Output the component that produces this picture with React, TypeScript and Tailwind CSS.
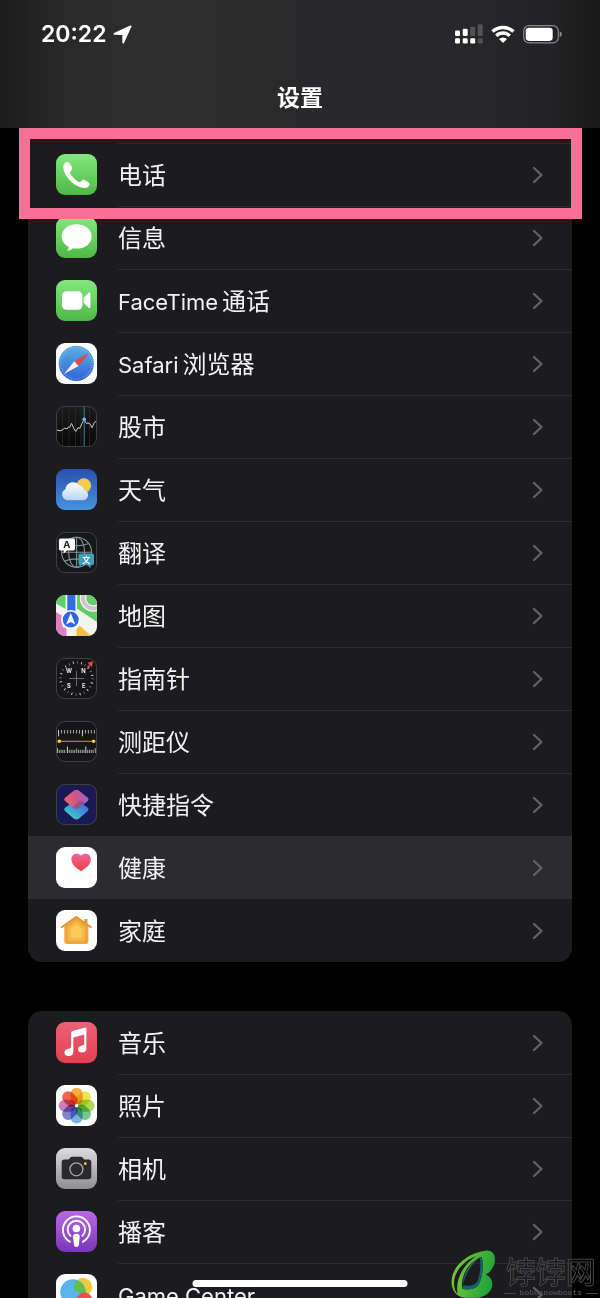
import type { ReactNode } from "react";

const SANS = "font-['Inter','Noto_Sans_CJK_SC',sans-serif]";

function Tile({ children, rim = false }: { children: ReactNode; rim?: boolean }) {
  return (
    <svg
      viewBox="0 0 41 41"
      aria-hidden="true"
      className={
        rim
          ? "size-[41px] shrink-0 rounded-[9px] outline outline-1 -outline-offset-1 outline-[#404042]"
          : "size-[41px] shrink-0 rounded-[9px]"
      }
    >
      {children}
    </svg>
  );
}

function Fill({ id, from, to }: { id: string; from: string; to: string }) {
  return (
    <>
      <defs>
        <linearGradient id={id} x1="0" y1="0" x2="0" y2="1">
          <stop offset="0" stopColor={from} />
          <stop offset="1" stopColor={to} />
        </linearGradient>
      </defs>
      <rect width="41" height="41" fill={`url(#${id})`} />
    </>
  );
}

const PhoneIcon = () => (
  <Tile>
    <Fill id="phone" from="#83e87e" to="#4fb845" />
    <path
      d="M11.4 7.8C9.6 7.6 7.3 9.9 7.3 13C7.6 22.6 19 33.6 29 34C31.6 34 34 31.4 33.7 29.7C33.3 28.4 29.6 26.2 27.7 25.7C25.9 25.4 25 27.9 23.6 28C20.6 27.4 14.3 21.2 14 18.4C14.1 17 16.5 16.2 16.2 14.3C15.6 12 13 8.1 11.4 7.8Z"
      fill="#fff"
    />
  </Tile>
);

const MessagesIcon = () => (
  <Tile>
    <Fill id="msg" from="#83e87e" to="#4fb845" />
    <path
      d="M20.7 7.2C12.3 7.2 5.7 12.5 5.7 19.4C5.7 23.8 8.4 27.6 12.6 29.7C12.8 31 12.2 32.6 11 33.7C13.4 33.5 15.6 32.5 17.1 31.2C18.3 31.5 19.5 31.6 20.7 31.6C29.1 31.6 35.7 26.2 35.7 19.4C35.7 12.5 29.1 7.2 20.7 7.2Z"
      fill="#fff"
    />
  </Tile>
);

const FaceTimeIcon = () => (
  <Tile>
    <Fill id="ft" from="#83e87e" to="#4fb845" />
    <rect x="6" y="11.3" width="20.4" height="18.4" rx="4.4" fill="#fff" />
    <path d="M27.7 17.6L32.7 12.8C33.5 12.1 34.4 12.4 34.4 13.5V27C34.4 28.2 33.5 28.5 32.7 27.8L27.7 23Z" fill="#fff" />
  </Tile>
);

const SafariIcon = () => (
  <Tile>
    <rect width="41" height="41" fill="#fff" />
    <defs>
      <linearGradient id="saf" x1="0" y1="0" x2="0" y2="1">
        <stop offset="0" stopColor="#5cb0e6" />
        <stop offset="1" stopColor="#2f62d6" />
      </linearGradient>
    </defs>
    <circle cx="20.3" cy="20.4" r="17.6" fill="url(#saf)" />
    <circle cx="20.3" cy="20.4" r="15.6" fill="none" stroke="#a9cdf2" strokeWidth="1.6" strokeDasharray="0.4 1.65" />
    <path d="M33.4 9.6L22.4 23L18.4 18.2Z" fill="#e2483f" />
    <path d="M8 31L18.4 18.2L22.4 23Z" fill="#fff" />
  </Tile>
);

const StocksIcon = () => (
  <Tile rim>
    <Fill id="stk" from="#1c1c1e" to="#080808" />
    <path d="M6.5 0V41M13 0V41M19.5 0V41M25 0V41M33.5 0V41" stroke="#2a2a2c" strokeWidth="0.8" />
    <path
      d="M0 24L5 24.8L8.7 22.2L11 23L12.5 21L13.8 21.3L15.6 17.4L17.7 22.3L19.7 25.4L22 21.7L23.8 22.3L26 17.5L28.2 13.4L30.3 17.4L32 17L33.7 17.6L36 21.7L38.3 16.6L41 14.6"
      fill="none"
      stroke="#c9c9c9"
      strokeWidth="1"
    />
    <path d="M28.2 0V41" stroke="#3f86a6" strokeWidth="1" />
    <circle cx="28.2" cy="13.2" r="1.8" fill="#5ac3ea" />
  </Tile>
);

const WeatherIcon = () => (
  <Tile>
    <Fill id="wx" from="#2850ad" to="#4893dd" />
    <defs>
      <linearGradient id="cloud" x1="0" y1="0" x2="0" y2="1">
        <stop offset="0" stopColor="#fff" />
        <stop offset="1" stopColor="#b9d4f3" />
      </linearGradient>
    </defs>
    <circle cx="27.8" cy="16.6" r="7.3" fill="#f6cb4c" />
    <g fill="url(#cloud)">
      <path d="M11.6 31.2A5.8 5.8 0 0 1 9.4 20.2A7.9 7.9 0 0 1 23.4 16.2A6.6 6.6 0 0 1 28.2 21A5.2 5.2 0 0 1 27.2 31.2Z" />
    </g>
  </Tile>
);

const TranslateIcon = () => (
  <Tile rim>
    <rect width="41" height="41" fill="#161719" />
    <g fill="none" stroke="#829698" strokeWidth="1.1">
      <circle cx="20.6" cy="20.3" r="15" />
      <ellipse cx="20.6" cy="20.3" rx="8" ry="15" />
      <path d="M20.6 5.3V35.3M5.6 20.3H35.6M8.5 11.5Q20.6 16 32.7 11.5M8.5 29.1Q20.6 24.600 32.7 29.1" />
    </g>
    <path d="M4.5 6.6H17.4Q19 6.6 19 8.2V16.8Q19 18.4 17.4 18.4H11L7.7 21.6V18.4H4.5Q2.9 18.4 2.9 16.8V8.2Q2.9 6.6 4.5 6.6Z" fill="#fff" />
    <text x="10.9" y="16" textAnchor="middle" fontSize="9.5" fontWeight="700" fill="#222" fontFamily="Inter">A</text>
    <path d="M24 21.5H36.4Q38 21.5 38 23.1V31.6Q38 33.2 36.4 33.2H34.6V36.2L31.5 33.2H24Q22.4 33.2 22.4 31.6V23.1Q22.4 21.5 24 21.5Z" fill="#3f9fb9" />
    <text x="30.2" y="30.5" textAnchor="middle" fontSize="8" fontWeight="700" fill="#fff" fontFamily="Noto Sans CJK SC">文</text>
  </Tile>
);

const MapsIcon = () => (
  <Tile>
    <rect width="41" height="41" fill="#f3f3f1" />
    <path d="M0 0H9.5V14L0 8.5Z" fill="#63cd6a" />
    <path d="M21 0H41V27L21 13.5Z" fill="#63cd6a" />
    <circle cx="37.5" cy="3" r="10.5" fill="none" stroke="#f3f3f1" strokeWidth="6.5" />
    <circle cx="37.5" cy="3" r="10.5" fill="none" stroke="#d3c3cf" strokeWidth="4" />
    <path d="M0 17L6.5 21V32L10.5 33.5V41H0Z" fill="#dd80bf" />
    <path d="M20.5 41V33.5L24 31L35 41Z" fill="#f4bd35" />
    <path d="M11.3 0H19.4V18H11.3Z" fill="#2f6fe0" />
    <circle cx="14.7" cy="24.6" r="9.6" fill="#fff" />
    <circle cx="14.7" cy="24.6" r="8" fill="#2f66dd" />
    <path d="M14.7 18L19.3 29.4L14.7 27L10.1 29.4Z" fill="#fff" />
  </Tile>
);

const CompassIcon = () => (
  <Tile rim>
    <rect width="41" height="41" fill="#161618" />
    <circle cx="20.5" cy="20.5" r="16" fill="none" stroke="#8f8f8f" strokeWidth="2.4" strokeDasharray="0.7 3.489" />
    <circle cx="20.5" cy="20.5" r="16" fill="none" stroke="#cfcfcf" strokeWidth="2.4" strokeDasharray="0.7 7.678" strokeDashoffset="-4.189" />
    <path d="M20.5 13V28M13 20.5H28" stroke="#6a6a6c" strokeWidth="1" />
    <g fontSize="5.8" fontWeight="700" fill="#e6e6e6" textAnchor="middle" fontFamily="Inter">
      <text x="13" y="14.7">W</text>
      <text x="27.5" y="14.7">N</text>
      <text x="12.8" y="30.2">S</text>
      <text x="27.7" y="30.2">E</text>
    </g>
    <path d="M37.3 3.2L35.8 9L34.2 7.5L31.7 9.7L30.9 8.8L33.3 6.4L31.6 4.8Z" fill="#e5483d" />
  </Tile>
);

const MeasureIcon = () => (
  <Tile rim>
    <rect width="41" height="41" fill="#161618" />
    <path d="M2.6 9V15.3M26.4 9V15.3" stroke="#d5d5d5" strokeWidth="1" />
    <path d="M5.6 9V12.5M8.6 9V12.5M11.6 9V12.5M14.6 9V12.5M17.5 9V12.5M20.5 9V12.5M23.5 9V12.5M29.4 9V12.5M32.4 9V12.5M35.4 9V12.5M38.4 9V12.5" stroke="#bdbdbd" strokeWidth="0.9" />
    <path d="M3 20.3H37.8" stroke="#d9a92d" strokeWidth="0.9" />
    <circle cx="3.3" cy="20.3" r="1.8" fill="#f5cd3b" />
    <circle cx="37.6" cy="20.3" r="1.8" fill="#f5cd3b" />
    <path d="M11.4 25.5V32M29.8 25.5V32" stroke="#d5d5d5" strokeWidth="1" />
    <path d="M1.5 27V32M3.3 28.8V32M5.1 28.8V32M6.9 28.8V32M8.7 28.8V32M13.3 28.8V32M15.2 28.8V32M17 28.8V32M18.8 28.8V32M20.7 27.5V32M22.5 28.8V32M24.3 28.8V32M26.2 28.8V32M28 28.8V32M31.7 28.8V32M33.5 28.8V32M35.3 28.8V32M37.1 28.8V32M39.3 27V32" stroke="#b5b5b5" strokeWidth="0.9" />
  </Tile>
);

const ShortcutsIcon = () => (
  <Tile rim>
    <rect width="41" height="41" fill="#191a54" />
    <defs>
      <linearGradient id="scTop" x1="0" y1="0.6" x2="1" y2="0.4">
        <stop offset="0" stopColor="#ec6566" />
        <stop offset="0.55" stopColor="#c9568f" />
        <stop offset="1" stopColor="#9c62cf" />
      </linearGradient>
      <linearGradient id="scLow" x1="0" y1="1" x2="1" y2="0">
        <stop offset="0" stopColor="#54dcb4" />
        <stop offset="0.5" stopColor="#3a9adb" />
        <stop offset="1" stopColor="#3d5fe0" />
      </linearGradient>
    </defs>
    <path d="M18 17.3Q20.4 15.5 22.8 17.3L31.8 23.7Q33.5 25.3 31.8 26.9L22.8 34.7Q20.4 36.3 18 34.7L9 26.9Q7.3 25.3 9 23.7Z" fill="url(#scLow)" />
    <path d="M18 6.5Q20.4 4.9 22.8 6.5L31.8 13.8Q33.5 15.4 31.8 17L22.8 24.3Q20.4 25.9 18 24.3L9 17Q7.3 15.4 9 13.8Z" fill="url(#scTop)" />
    <path d="M22 17.600Q25 15.600 29.3 19L22.8 24.3Q20.4 25.9 18 24.3L16.5 23Z" fill="#5a4a8a" opacity="0.45" />
  </Tile>
);

const HealthIcon = () => (
  <Tile>
    <rect width="41" height="41" fill="#fff" />
    <defs>
      <linearGradient id="hl" x1="0" y1="0" x2="0" y2="1">
        <stop offset="0" stopColor="#f064a0" />
        <stop offset="1" stopColor="#ec4038" />
      </linearGradient>
    </defs>
    <path d="M25.1 24C20.5 21.4 15.4 17.6 15.4 12.2C15.4 8.8 17.6 6.7 20.3 6.7C22.4 6.7 24.2 7.3 25.1 8.7C26 7.3 27.8 6.7 29.9 6.7C32.6 6.7 34.8 8.8 34.8 12.2C34.8 17.6 29.7 21.4 25.1 24Z" fill="url(#hl)" />
  </Tile>
);

const HomeIcon = () => (
  <Tile>
    <rect width="41" height="41" fill="#fff" />
    <path d="M28.3 9H31.4V15H28.3Z" fill="#e99b36" />
    <path d="M20.4 7L32.4 15.5V31.6Q32.4 33.9 30.1 33.9H10.6Q8.3 33.9 8.3 31.6V15.5Z" fill="#f0a63a" />
    <path d="M5.7 17.3L20.4 6.9L35 17.3" fill="none" stroke="#e5953b" strokeWidth="1.9" strokeLinecap="round" strokeLinejoin="round" />
    <path d="M20.4 11L28.8 17.3V28.8Q28.8 30.7 26.9 30.7H13.9Q12 30.7 12 28.8V17.3Z" fill="#f5b947" />
    <path d="M20.4 14.5L25.7 18.500V26.4Q25.7 27.8 24.3 27.8H16.5Q15.1 27.8 15.1 26.400V18.500Z" fill="#f9cd5c" />
  </Tile>
);

const MusicIcon = () => (
  <Tile>
    <Fill id="mus" from="#e96377" to="#e53f52" />
    <path d="M15 11.2Q15 9.4 16.7 9L28.9 5.6Q30.4 5.3 30.4 6.9V26.3Q30.4 30.6 25.9 30.6Q22.1 30.4 22.1 27.2Q22.1 24.2 25.5 23.7Q28.2 23.4 28.2 22V12.6L17.3 15.5V29.4Q17.3 33.9 12.6 33.9Q8.4 33.6 8.4 30.4Q8.4 27.5 11.8 26.9Q15 26.5 15 24.8Z" fill="#fff" />
  </Tile>
);

const PETALS = ["#f4a11f", "#e9de35", "#a5d13f", "#5fbb7a", "#62a5db", "#6d6fc4", "#c467ae", "#e84b3c"];

const PhotosIcon = () => (
  <Tile>
    <rect width="41" height="41" fill="#fff" />
    <g className="isolate">
      {PETALS.map((color, i) => (
        <rect
          key={color}
          x="14.6"
          y="2.8"
          width="12"
          height="17"
          rx="6"
          fill={color}
          fillOpacity="0.85"
          transform={`rotate(${i * 45} 20.6 20.7)`}
          className="mix-blend-multiply"
        />
      ))}
    </g>
    <circle cx="20.6" cy="20.7" r="1.6" fill="#fff" />
  </Tile>
);

const CameraIcon = () => (
  <Tile>
    <Fill id="cam" from="#dcdbe0" to="#8f8f93" />
    <path d="M8.5 11.4H12.2Q13 11.4 13.5 10.5Q14.3 8.7 16 8.7H24.8Q26.5 8.7 27.3 10.5Q27.8 11.4 28.6 11.4H32.5Q35.3 11.4 35.3 14.2V28.5Q35.3 31.3 32.5 31.3H8.5Q5.7 31.3 5.7 28.5V14.2Q5.7 11.4 8.5 11.4Z" fill="#2a2a2d" />
    <circle cx="20.4" cy="21.3" r="6.5" fill="none" stroke="#a9a9ad" strokeWidth="1.3" />
    <circle cx="29.3" cy="15.7" r="1.4" fill="#eec83f" />
  </Tile>
);

const PodcastsIcon = () => (
  <Tile>
    <Fill id="pod" from="#ba68e6" to="#7b35b8" />
    <g fill="none" stroke="#fff" strokeWidth="1.9" strokeLinecap="round">
      <path d="M13.8 30.7A13.5 13.5 0 1 1 27 30.7" />
      <path d="M14.4 24.8A8.7 8.7 0 1 1 26.4 24.8" />
    </g>
    <circle cx="20.4" cy="17.5" r="3.8" fill="#fff" />
    <path d="M17 25.4Q17 22.8 20.4 22.8Q23.8 22.8 23.8 25.4L22.8 33.9Q22.5 36 20.4 36Q18.3 36 18 33.9Z" fill="#fff" />
  </Tile>
);

const GameCenterIcon = () => (
  <Tile>
    <rect width="41" height="41" fill="#fff" />
    <circle cx="27" cy="13" r="9.2" fill="#f1cb3a" />
    <circle cx="17" cy="18" r="12.800" fill="#58b4ec" />
    <path d="M18.200 15.500A9.2 9.2 0 0 1 20.6 6.300A12.8 12.8 0 0 1 29.8 18A9.2 9.2 0 0 1 18.200 15.500Z" fill="#62bf4c" />
    <circle cx="28.5" cy="26" r="7.6" fill="#e8504d" />
    <circle cx="14" cy="31" r="6" fill="#a95fd0" />
  </Tile>
);

interface Item {
  label: string;
  latin?: string;
  Icon: () => ReactNode;
  pressed?: boolean;
  marked?: boolean;
}

const APPS: Item[] = [
  { label: "电话", Icon: PhoneIcon, marked: true },
  { label: "信息", Icon: MessagesIcon },
  { latin: "FaceTime", label: "通话", Icon: FaceTimeIcon },
  { latin: "Safari", label: "浏览器", Icon: SafariIcon },
  { label: "股市", Icon: StocksIcon },
  { label: "天气", Icon: WeatherIcon },
  { label: "翻译", Icon: TranslateIcon },
  { label: "地图", Icon: MapsIcon },
  { label: "指南针", Icon: CompassIcon },
  { label: "测距仪", Icon: MeasureIcon },
  { label: "快捷指令", Icon: ShortcutsIcon },
  { label: "健康", Icon: HealthIcon, pressed: true },
  { label: "家庭", Icon: HomeIcon },
];

const MEDIA: Item[] = [
  { label: "音乐", Icon: MusicIcon },
  { label: "照片", Icon: PhotosIcon },
  { label: "相机", Icon: CameraIcon },
  { label: "播客", Icon: PodcastsIcon },
  { latin: "Game Center", label: "", Icon: GameCenterIcon },
];

function Row({ item, line }: { item: Item; line: boolean }) {
  const { Icon } = item;
  return (
    <li className="relative">
      <a href="#" className={item.pressed ? "flex h-[63px] items-center bg-[#2c2c2e] pl-7" : "flex h-[63px] items-center pl-7"}>
        <Icon />
        <span
          className={
            line
              ? "ml-[21px] flex h-full flex-1 items-center justify-between border-t border-[#2c2c2e] pr-7"
              : "ml-[21px] flex h-full flex-1 items-center justify-between border-t border-transparent pr-7"
          }
        >
          <span className="flex items-baseline gap-1 pt-0.5 text-[24px] leading-[34px] whitespace-nowrap text-[#f2f2f4]">
            {item.latin && <span className="text-[22px]">{item.latin}</span>}
            {item.label && <span>{item.label}</span>}
          </span>
          <svg viewBox="0 0 12 18" aria-hidden="true" className="h-[18px] w-3 shrink-0">
            <path d="M2 2L9.5 9L2 16" fill="none" stroke="#636366" strokeWidth="2.3" strokeLinecap="round" strokeLinejoin="round" />
          </svg>
        </span>
      </a>
      {item.marked && (
        <span className="pointer-events-none absolute -top-[15px] -right-[10px] -left-[9px] z-10 h-[91px] border-[11px] border-[#f97096]" />
      )}
    </li>
  );
}

function Rows({ items, openTop = false }: { items: Item[]; openTop?: boolean }) {
  return (
    <>
      {items.map((item, i) => (
        <Row
          key={item.latin ?? item.label}
          item={item}
          line={(i > 0 || openTop) && !item.pressed && !items[i - 1]?.pressed}
        />
      ))}
    </>
  );
}

function StatusBar() {
  return (
    <div className="flex items-center justify-between pt-[18px] pr-[38px] pl-[41px]">
      <div className="flex items-center gap-1.5">
        <span className="text-[23px] leading-8 font-semibold">20:22</span>
        <svg viewBox="0 0 19 19" aria-label="定位" className="size-[19px]">
          <path
            d="M17.6 1.400L10.200 17.500V9.200L1.400 8.900Z"
            fill="#fff"
            stroke="#fff"
            strokeWidth="1.800"
            strokeLinejoin="round"
          />
        </svg>
      </div>
      <div className="flex items-center gap-2">
        <svg viewBox="0 0 29 20" aria-label="信号" className="h-5 w-[29px]">
          <g fill="#fff">
            <rect x="1" y="6.5" width="5" height="5.5" rx="1.3" />
            <rect x="8.7" y="4.7" width="5" height="7.3" rx="1.3" />
            <rect x="1" y="14.3" width="5" height="5.3" rx="1.3" />
            <rect x="8.7" y="14.3" width="5" height="5.3" rx="1.3" />
            <rect x="16.2" y="14.3" width="5" height="5.3" rx="1.3" />
          </g>
          <g fill="#535355">
            <rect x="16.2" y="2.7" width="5" height="9.3" rx="1.3" />
            <rect x="23.7" y="0.3" width="5" height="11.7" rx="1.3" />
            <rect x="23.7" y="14.3" width="5" height="5.3" rx="1.3" />
          </g>
        </svg>
        <svg viewBox="0 0 24 18" aria-label="Wi-Fi" className="h-[18px] w-6">
          <g fill="none" stroke="#fff" strokeWidth="3.4">
            <path d="M1.5 6.6A15.3 15.3 0 0 1 22.5 6.6" />
            <path d="M5.3 10.7A9.6 9.6 0 0 1 18.7 10.7" />
          </g>
          <path d="M8 14A5.8 5.8 0 0 1 16 14L12 18Z" fill="#fff" />
        </svg>
        <svg viewBox="0 0 39 19" aria-label="电池" className="h-[19px] w-[39px]">
          <rect x="0.7" y="0.7" width="34.6" height="17.2" rx="5.3" fill="none" stroke="#88888a" strokeWidth="1.2" />
          <rect x="2.7" y="2.7" width="27" height="13.2" rx="3.3" fill="#fff" />
          <path d="M36.7 6.3Q38.9 7.2 38.9 9.3Q38.9 11.4 36.7 12.3Z" fill="#88888a" />
        </svg>
      </div>
    </div>
  );
}

function Watermark() {
  return (
    <div className="pointer-events-none absolute right-[2px] bottom-0 z-20 flex items-end gap-2">
      <svg viewBox="0 0 135 144" aria-hidden="true" className="h-12 w-[45px]">
        <defs>
          <linearGradient id="leaf" x1="0" y1="0" x2="1" y2="0.3">
            <stop offset="0" stopColor="#8cc63a" />
            <stop offset="0.5" stopColor="#55bb35" />
            <stop offset="1" stopColor="#22a33a" />
          </linearGradient>
        </defs>
        <path
          fillRule="evenodd"
          fill="url(#leaf)"
          d="M104 2C50 8 6 46 2 90C0 118 14 140 40 143H84C108 138 124 122 124 102C124 88 116 78 104 74C120 66 132 48 132 28C132 10 120 0 104 2ZM92 20C98 42 96 78 84 102C76 116 54 122 34 116C28 92 42 40 92 20ZM76 18C42 30 10 62 9 98C9 112 12 124 20 132C12 92 34 46 76 18Z"
        />
        <path d="M92 20C98 42 96 78 84 102C76 116 54 122 34 116L36 106C58 110 74 104 80 92C88 72 90 44 86 24Z" fill="#16626a" />
        <path d="M84 24C56 38 36 70 35 104C42 78 58 46 84 24Z" fill="#2c5a63" />
      </svg>
      <div className="flex flex-col items-center text-[#4c4c4e]">
        <span className="text-[30px] leading-[32px] font-medium text-transparent [-webkit-text-stroke:1px_#454547]">饽饽网</span>
        <span className="flex items-center gap-1 font-['Liberation_Mono',monospace] text-[8px] leading-[10px] font-bold">
          <i className="h-px w-3 bg-[#454547]" />
          bobosnowboots
          <i className="h-px w-3 bg-[#454547]" />
        </span>
      </div>
    </div>
  );
}

export default function App() {
  return (
    <div className={`relative flex h-screen flex-col overflow-hidden bg-black text-white ${SANS}`}>
      <header className="h-32 shrink-0 bg-[linear-gradient(90deg,#1c1c1d_0%,#2a292a_11%,#2f2f30_25%,#29292b_50%,#28282a_75%,#232325_92%,#19191a_100%)]">
        <StatusBar />
        <h1 className="pt-[31px] text-center text-[23px] leading-[34px] font-bold">设置</h1>
      </header>
      <main className="flex min-h-0 flex-1 flex-col gap-[49px] px-7">
        <ul className="shrink-0 rounded-b-[14px] bg-[#1c1c1e] pt-[15px]">
          <Rows items={APPS} openTop />
        </ul>
        <ul className="shrink-0 rounded-t-[14px] bg-[#1c1c1e]">
          <Rows items={MEDIA} />
        </ul>
      </main>
      <div className="absolute bottom-[11px] left-1/2 z-20 h-[7px] w-[215px] -translate-x-1/2 rounded-full bg-white" />
      <Watermark />
    </div>
  );
}
